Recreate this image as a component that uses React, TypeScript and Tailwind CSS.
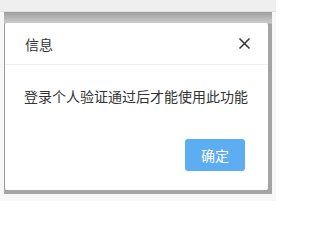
const App = () => {
  return (
    <div
      className="w-[276px] h-[201px] overflow-hidden bg-[#f7f7f7]"
      style={{ fontFamily: '"Noto Sans CJK SC", "Noto Sans", sans-serif' }}
    >
      {/* page strip behind the overlay */}
      <div className="h-[12px] bg-[#efefef] border-b border-[#e0e0e0]" />

      {/* dialog shadow */}
      <div className="ml-[4px] w-[268px] pt-[11px] pr-[4px] pb-[4px] bg-[linear-gradient(to_bottom,#9f9f9f,#cbcbcb_11px,#a4a4a4_12px)]">
        <div className="h-[167px] bg-white rounded-[2px] border-l border-[#9a9a9a] flex flex-col">
          <div className="h-[42px] pl-[20px] pr-[17px] flex items-center justify-between border-b border-[#f0f0f0]">
            <span className="text-[14px] leading-[20px] text-[#333]">信息</span>
            <svg width="13" height="13" viewBox="0 0 13 13" className="text-[#333]">
              <path d="M1.5 1.5 L11.5 11.5 M11.5 1.5 L1.5 11.5" stroke="currentColor" strokeWidth="1.5" />
            </svg>
          </div>
          <p className="pt-[21px] pl-[19px] text-[14px] leading-[20px] text-[#333] whitespace-nowrap">
            登录个人验证通过后才能使用此功能
          </p>
          <div className="pt-[33px] pr-[23px] flex justify-end">
            <button className="w-[60px] h-[32px] rounded-[3px] bg-[#5cadf2] text-white text-[14px] leading-[20px]">
              确定
            </button>
          </div>
        </div>
      </div>
    </div>
  );
};

export default App;
